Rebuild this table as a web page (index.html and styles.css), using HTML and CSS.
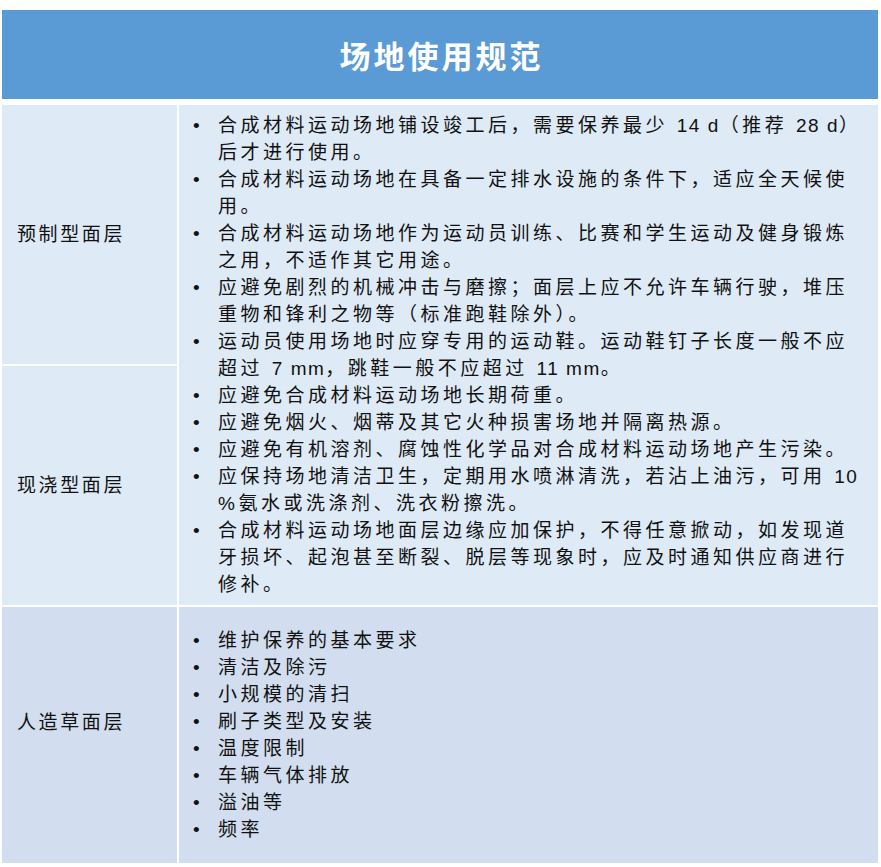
FILE: index.html
```html
<!DOCTYPE html>
<html lang="zh-CN">
<head>
<meta charset="utf-8">
<title>场地使用规范</title>
<link rel="stylesheet" href="styles.css">
</head>
<body>
<div class="sheet">
  <div class="title">场地使用规范</div>
  <div class="grid">
    <div class="label r1">预制型面层</div>
    <div class="label r2">现浇型面层</div>
    <div class="content c12">
      <ul class="list">
        <li>合成材料运动场地铺设竣工后，需要保养最少 <span class="lt">14 d</span>（推荐 <span class="lt">28 d</span>）后才进行使用。</li>
        <li>合成材料运动场地在具备一定排水设施的条件下，适应全天候使用。</li>
        <li>合成材料运动场地作为运动员训练、比赛和学生运动及健身锻炼之用，不适作其它用途。</li>
        <li>应避免剧烈的机械冲击与磨擦；面层上应不允许车辆行驶，堆压重物和锋利之物等（标准跑鞋除外）。</li>
        <li>运动员使用场地时应穿专用的运动鞋。运动鞋钉子长度一般不应超过 <span class="lt">7 mm</span>，跳鞋一般不应超过 <span class="lt">11 mm</span>。</li>
        <li>应避免合成材料运动场地长期荷重。</li>
        <li>应避免烟火、烟蒂及其它火种损害场地并隔离热源。</li>
        <li>应避免有机溶剂、腐蚀性化学品对合成材料运动场地产生污染。</li>
        <li>应保持场地清洁卫生，定期用水喷淋清洗，若沾上油污，可用 <span class="lt">10</span> %氨水或洗涤剂、洗衣粉擦洗。</li>
        <li>合成材料运动场地面层边缘应加保护，不得任意掀动，如发现道牙损坏、起泡甚至断裂、脱层等现象时，应及时通知供应商进行修补。</li>
      </ul>
    </div>
    <div class="label r3">人造草面层</div>
    <div class="content c3">
      <ul class="list">
        <li>维护保养的基本要求</li>
        <li>清洁及除污</li>
        <li>小规模的清扫</li>
        <li>刷子类型及安装</li>
        <li>温度限制</li>
        <li>车辆气体排放</li>
        <li>溢油等</li>
        <li>频率</li>
      </ul>
    </div>
  </div>
</div>
</body>
</html>
```

FILE: styles.css
```css
html, body {
  margin: 0;
  padding: 0;
  background: #ffffff;
}

body {
  font-family: "Liberation Sans", "Noto Sans CJK SC", sans-serif;
  color: #111111;
}

.sheet {
  width: 876px;
  margin: 10px 0 0 2px;
}

.title {
  height: 89px;
  background: #5b9bd5;
  color: #ffffff;
  font-family: "Noto Sans CJK SC", sans-serif;
  font-size: 31px;
  font-weight: 700;
  letter-spacing: 3px;
  display: flex;
  align-items: center;
  justify-content: center;
  padding-left: 3px;
}

.grid {
  margin-top: 6px;
  display: grid;
  grid-template-columns: 175px 699px;
  grid-template-rows: 259px 239px 256px;
  column-gap: 2px;
  row-gap: 2px;
}

.label {
  display: flex;
  align-items: center;
  padding-left: 15px;
  font-size: 19px;
  letter-spacing: 2.6px;
  line-height: 27px;
}

.r1 { grid-row: 1; grid-column: 1; background: #deeaf6; }
.r2 { grid-row: 2; grid-column: 1; background: #deeaf6; }
.r3 { grid-row: 3; grid-column: 1; background: #d2deef; padding-bottom: 26px; }

.content {
  display: flex;
  flex-direction: column;
  justify-content: center;
  padding: 0 10px 0 14px;
}

.c12 { grid-row: 1 / span 2; grid-column: 2; background: #deeaf6; }
.c3 { grid-row: 3; grid-column: 2; background: #d2deef; }

.list {
  list-style: none;
  margin: 0;
  padding: 0;
}

.list li {
  position: relative;
  padding-left: 25px;
  font-size: 19px;
  line-height: 27px;
  letter-spacing: 3.5px;
  text-align: left;
}

.list li::before {
  content: "•";
  position: absolute;
  left: 0;
  top: 0;
  font-family: "Liberation Sans", sans-serif;
  letter-spacing: 0;
}

.lt {
  letter-spacing: 1.5px;
}
```
